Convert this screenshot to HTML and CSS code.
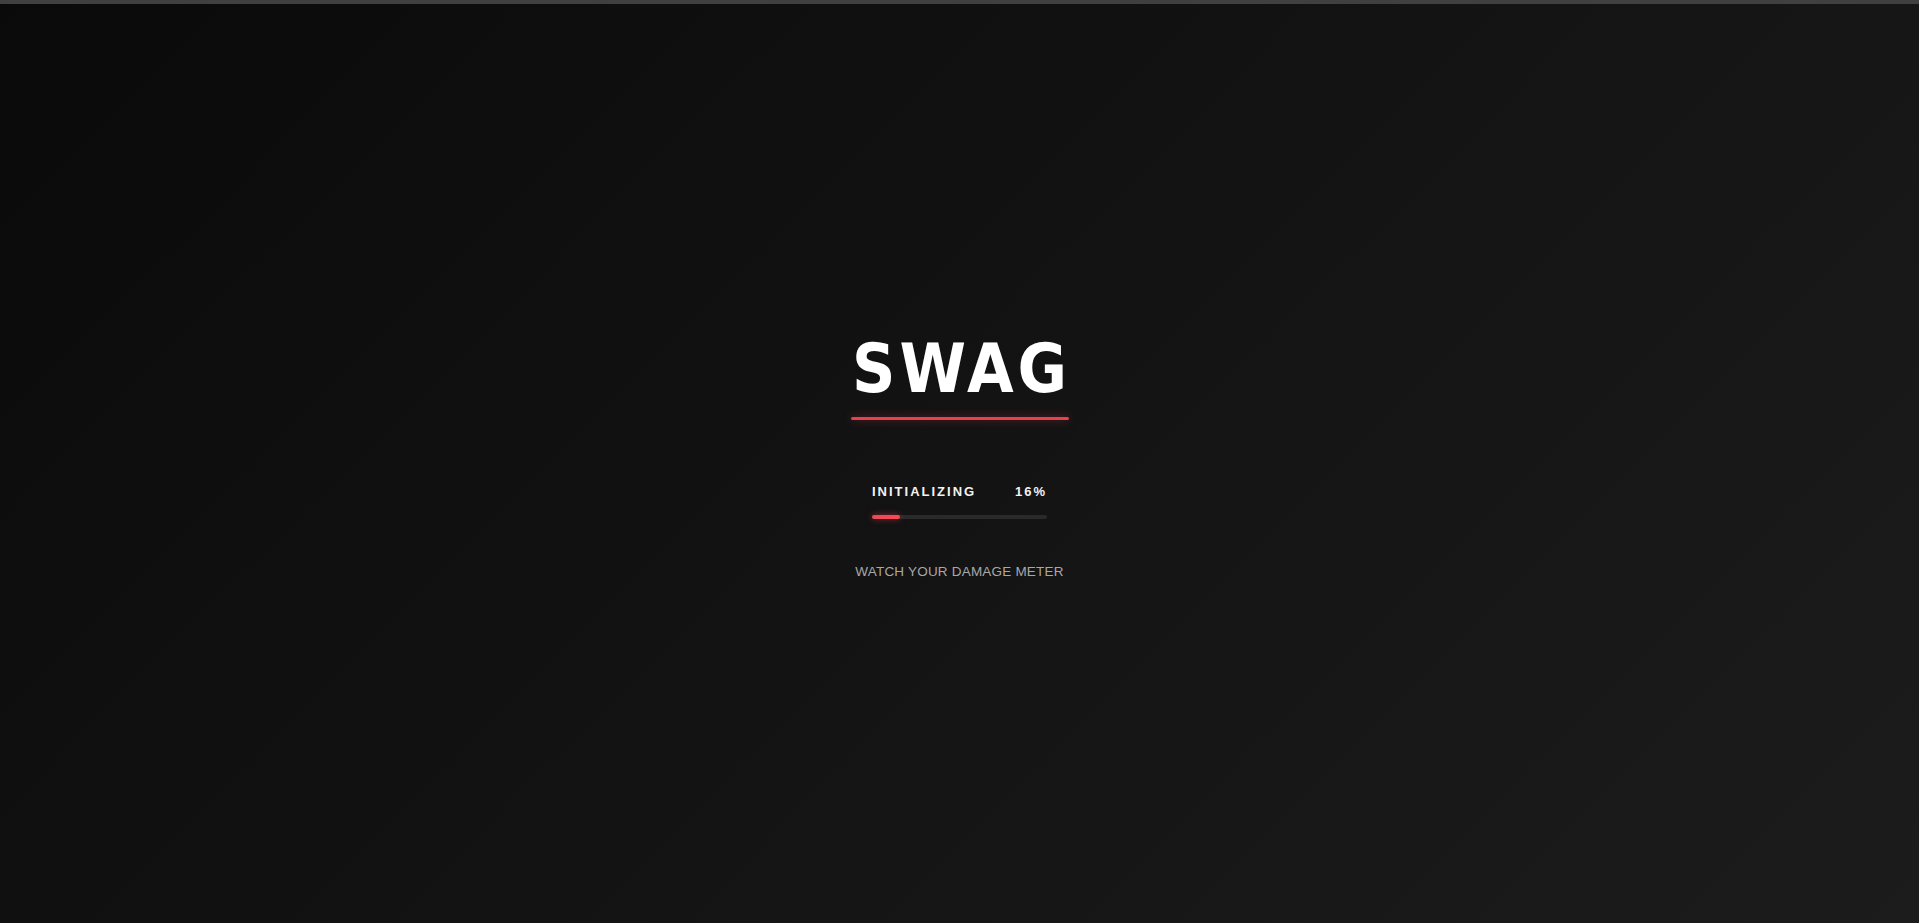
FILE: index.html
```html
<!DOCTYPE html>
<html lang="en">
<head>
<meta charset="utf-8">
<title>SWAG</title>
<link rel="stylesheet" href="styles.css">
</head>
<body>
<div class="topbar"></div>
<main class="stage">
  <div class="loader">
    <div class="brand">
      <h1 class="logo">SWAG</h1>
      <div class="logo-line"></div>
    </div>
    <div class="progress">
      <div class="progress-labels">
        <span class="status">INITIALIZING</span>
        <span class="percent">16%</span>
      </div>
      <div class="track"><div class="fill" style="width:16%"></div></div>
    </div>
    <p class="tip">WATCH YOUR DAMAGE METER</p>
  </div>
</main>
</body>
</html>
```
FILE: styles.css
```css
html, body {
  margin: 0;
  padding: 0;
  height: 100%;
}
body {
  display: flex;
  flex-direction: column;
  background: linear-gradient(135deg, #0a0a0a 0%, #131313 50%, #1c1c1c 100%);
  color: #fff;
  font-family: "Liberation Sans", Arial, sans-serif;
  overflow: hidden;
}
.topbar {
  height: 4px;
  flex: 0 0 4px;
  background: #404040;
}
.stage {
  flex: 1;
  display: flex;
  align-items: center;
  justify-content: center;
  padding-bottom: 11px;
}
.loader {
  display: flex;
  flex-direction: column;
  align-items: center;
}
.brand {
  display: flex;
  flex-direction: column;
  align-items: center;
}
.logo {
  margin: 0;
  font-family: "DejaVu Sans Condensed", "DejaVu Sans", sans-serif;
  font-weight: 700;
  font-size: 67px;
  line-height: 67px;
  letter-spacing: 4px;
  padding-left: 4px;
  color: #fff;
}
.logo-line {
  margin-top: 14px;
  width: 218px;
  height: 3px;
  border-radius: 2px;
  background: #e8404e;
  box-shadow: 0 0 10px rgba(232, 64, 78, 0.45);
}
.progress {
  margin-top: 64px;
  width: 175px;
}
.progress-labels {
  display: flex;
  justify-content: space-between;
  font-size: 13px;
  line-height: 16px;
  font-weight: 700;
  letter-spacing: 2px;
  color: #f2f2f2;
}
.track {
  margin-top: 15px;
  height: 4px;
  border-radius: 2px;
  background: #2a2a2a;
  overflow: visible;
}
.fill {
  height: 100%;
  border-radius: 2px;
  background: linear-gradient(90deg, #e84a58, #ff4655);
  box-shadow: 0 0 6px rgba(255, 70, 85, 0.5);
}
.tip {
  margin: 45px 0 0;
  font-size: 13.5px;
  line-height: 16px;
  color: #a8a8a8;
  letter-spacing: 0.2px;
}
```
